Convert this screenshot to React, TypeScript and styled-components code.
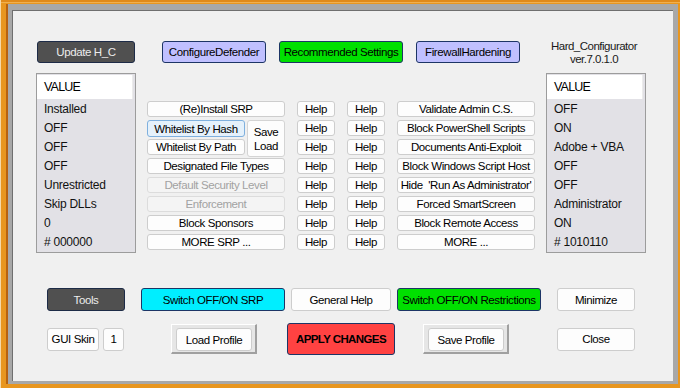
import styled, { createGlobalStyle, css } from "styled-components";

const GlobalStyle = createGlobalStyle`
  html, body {
    margin: 0;
    padding: 0;
  }
  body {
    width: 680px;
    height: 388px;
    overflow: hidden;
    background: #e8961f;
    font-family: "Liberation Sans", Arial, sans-serif;
  }
`;

const Frame = styled.div`
  width: 680px;
  height: 388px;
  box-sizing: border-box;
  padding: 4px 3px 4px 7px;
  background: linear-gradient(#e08a1a 0 2px, #f0b050 2px 3px, #e8961f 3px);
  border-left: 1px solid #f6d9a8;
`;

const Window = styled.div`
  box-sizing: border-box;
  width: 670px;
  height: 380px;
  border-style: solid;
  border-color: #a8a8a8;
  border-width: 6px 5px 3px 4px;
  background: #f0f0f0;
  box-shadow: inset 1px 1px 0 #6f6f6f, -2px 0 0 #b8620f;
  padding-top: 31px;
`;

type Tone = "plain" | "dark" | "lavender" | "green" | "cyan" | "red" | "focus" | "disabled";

const tones: Record<Tone, ReturnType<typeof css>> = {
  plain: css`
    background: #fdfdfd;
    border-color: #cdcdcd;
    color: #000;
  `,
  dark: css`
    background: #505050;
    border-color: #1d2b47;
    color: #ececec;
  `,
  lavender: css`
    background: #c0c0ff;
    border-color: #1d3566;
    color: #000;
  `,
  green: css`
    background: #00e000;
    border-color: #1d3566;
    color: #000;
  `,
  cyan: css`
    background: #00eeff;
    border-color: #1d3566;
    color: #000;
  `,
  red: css`
    background: #ff4242;
    border-color: #1d3566;
    color: #000;
    font-weight: bold;
    letter-spacing: -0.6px;
  `,
  focus: css`
    background: #e5f1fb;
    border-color: #7fb0de;
    color: #000;
  `,
  disabled: css`
    background: #f4f4f4;
    border-color: #dcdcdc;
    color: #a2a2a2;
  `,
};

const Btn = styled.div<{ $tone?: Tone; $w?: number; $h?: number }>`
  box-sizing: border-box;
  display: flex;
  align-items: center;
  justify-content: center;
  width: ${(p) => (p.$w ? `${p.$w}px` : "auto")};
  height: ${(p) => (p.$h ? `${p.$h}px` : "16px")};
  border: 1px solid;
  border-radius: 3px;
  font-size: 11.5px;
  line-height: 12px;
  letter-spacing: -0.4px;
  white-space: pre;
  ${(p) => tones[p.$tone ?? "plain"]}
`;

const TopRow = styled.div`
  display: flex;
  align-items: flex-start;
  height: 22px;
  padding-left: 25px;
`;

const TopGap = styled.div<{ $w: number }>`
  width: ${(p) => p.$w}px;
  flex: none;
`;

const Title = styled.div`
  width: 96px;
  margin-top: -1px;
  text-align: center;
  font-size: 11.5px;
  letter-spacing: -0.5px;
  line-height: 13px;
  color: #1a1a1a;
`;

const MainRow = styled.div`
  display: flex;
  align-items: flex-start;
  gap: 11px;
  padding-left: 24px;
  margin-top: 10px;
`;

const ValueList = styled.div`
  box-sizing: border-box;
  width: 100px;
  height: 180px;
  border: 1px solid #9c9c9c;
  background: #e2e1e6;
  padding-top: 1px;
`;

const ListHead = styled.div`
  width: 96px;
  height: 24px;
  background: #fff;
  border-right: 1px solid #ececec;
  padding-left: 7px;
  box-sizing: border-box;
  display: flex;
  align-items: center;
  font-size: 12.5px;
  letter-spacing: -0.8px;
  color: #000;
`;

const ListItem = styled.div`
  height: 19px;
  padding-left: 7px;
  display: flex;
  align-items: center;
  font-size: 12px;
  letter-spacing: -0.25px;
  color: #111;
`;

const Controls = styled.div`
  margin-top: 28px;
  display: grid;
  grid-template-columns: 138px 38px 38px 138px;
  grid-auto-rows: 16px;
  column-gap: 12px;
  row-gap: 3px;
`;

const WhitelistGroup = styled.div`
  grid-row: span 2;
  display: grid;
  grid-template-columns: 98px 38px;
  grid-template-rows: 17px 16px;
  column-gap: 2px;
  row-gap: 2px;
`;

const SaveLoad = styled(Btn)`
  grid-row: span 2;
  height: 37px;
  flex-direction: column;
  font-size: 11.5px;
  line-height: 14px;
  border-color: #d4d4d4;
`;

const BottomRow = styled.div<{ $top: number }>`
  display: flex;
  align-items: center;
  padding-left: 35px;
  margin-top: ${(p) => p.$top}px;
`;

const Space = styled.div<{ $w: number }>`
  width: ${(p) => p.$w}px;
  flex: none;
`;

const ProfileFrame = styled.div`
  box-sizing: border-box;
  width: 86px;
  height: 30px;
  border-style: solid;
  border-width: 1px 2px 2px 1px;
  border-color: #ffffff #a0a0a0 #a0a0a0 #ffffff;
  background: #e6e6e6;
  padding: 3px 0 0 4px;
`;

const srpLeft: { label: string; tone?: Tone }[] = [
  { label: "(Re)Install SRP" },
  { label: "" },
  { label: "" },
  { label: "Designated File Types" },
  { label: "Default Security Level", tone: "disabled" },
  { label: "Enforcement", tone: "disabled" },
  { label: "Block Sponsors" },
  { label: "MORE SRP ..." },
];

const rightButtons = [
  "Validate Admin C.S.",
  "Block PowerShell Scripts",
  "Documents Anti-Exploit",
  "Block Windows Script Host",
  "Hide  'Run As Administrator'",
  "Forced SmartScreen",
  "Block Remote Access",
  "MORE ...",
];

const leftValues = ["Installed", "OFF", "OFF", "OFF", "Unrestricted", "Skip DLLs", "0", "# 000000"];
const rightValues = ["OFF", "ON", "Adobe + VBA", "OFF", "OFF", "Administrator", "ON", "# 1010110"];

const App = () => {
  return (
    <>
      <GlobalStyle />
      <Frame>
        <Window>
          <TopRow>
            <Btn $tone="dark" $w={98} $h={22}>Update H_C</Btn>
            <TopGap $w={27} />
            <Btn $tone="lavender" $w={104} $h={22}>ConfigureDefender</Btn>
            <TopGap $w={13} />
            <Btn $tone="green" $w={124} $h={22}>Recommended Settings</Btn>
            <TopGap $w={13} />
            <Btn $tone="lavender" $w={104} $h={22}>FirewallHardening</Btn>
            <TopGap $w={26} />
            <Title>
              Hard_Configurator
              <br />
              ver.7.0.1.0
            </Title>
          </TopRow>

          <MainRow>
            <ValueList>
              <ListHead>VALUE</ListHead>
              {leftValues.map((v, i) => (
                <ListItem key={i}>{v}</ListItem>
              ))}
            </ValueList>

            <Controls>
              {srpLeft.map((item, i) => (
                <>
                  {i === 1 && (
                    <WhitelistGroup key={`wl${i}`}>
                      <Btn $tone="focus" $h={17}>Whitelist By Hash</Btn>
                      <SaveLoad>
                        <span>Save</span>
                        <span>Load</span>
                      </SaveLoad>
                      <Btn>Whitelist By Path</Btn>
                    </WhitelistGroup>
                  )}
                  {i !== 1 && i !== 2 && (
                    <Btn key={`l${i}`} $tone={item.tone}>
                      {item.label}
                    </Btn>
                  )}
                  <Btn key={`h1${i}`}>Help</Btn>
                  <Btn key={`h2${i}`}>Help</Btn>
                  <Btn key={`r${i}`}>{rightButtons[i]}</Btn>
                </>
              ))}
            </Controls>

            <ValueList>
              <ListHead>VALUE</ListHead>
              {rightValues.map((v, i) => (
                <ListItem key={i}>{v}</ListItem>
              ))}
            </ValueList>
          </MainRow>

          <BottomRow $top={35}>
            <Btn $tone="dark" $w={78} $h={23}>Tools</Btn>
            <Space $w={16} />
            <Btn $tone="cyan" $w={144} $h={23}>Switch OFF/ON SRP</Btn>
            <Space $w={6} />
            <Btn $w={100} $h={23}>General Help</Btn>
            <Space $w={6} />
            <Btn $tone="green" $w={144} $h={23}>Switch OFF/ON Restrictions</Btn>
            <Space $w={16} />
            <Btn $w={78} $h={23}>Minimize</Btn>
          </BottomRow>

          <BottomRow $top={12}>
            <Btn $w={52} $h={23}>GUI Skin</Btn>
            <Space $w={4} />
            <Btn $w={21} $h={23}>1</Btn>
            <Space $w={47} />
            <ProfileFrame>
              <Btn $w={76} $h={23}>Load Profile</Btn>
            </ProfileFrame>
            <Space $w={30} />
            <Btn $tone="red" $w={108} $h={32}>APPLY CHANGES</Btn>
            <Space $w={28} />
            <ProfileFrame>
              <Btn $w={76} $h={23}>Save Profile</Btn>
            </ProfileFrame>
            <Space $w={48} />
            <Btn $w={78} $h={23}>Close</Btn>
          </BottomRow>
        </Window>
      </Frame>
    </>
  );
};

export default App;
